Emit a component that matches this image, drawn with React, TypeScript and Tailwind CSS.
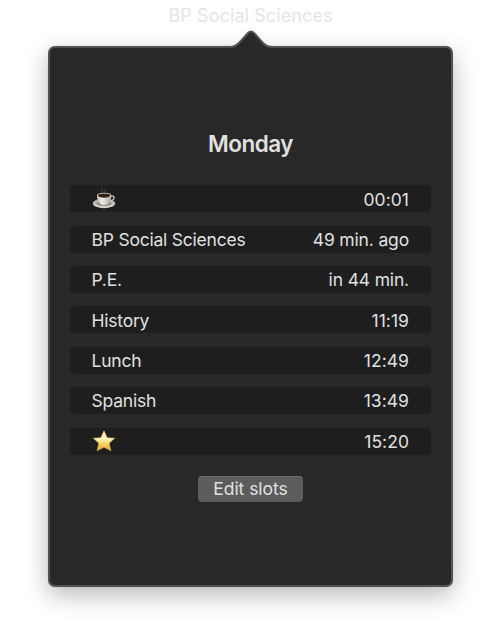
import React from "react";

type Slot = {
  id: string;
  label: React.ReactNode;
  time: string;
  clock?: boolean;
};

function Coffee() {
  return (
    <svg width="24" height="22" viewBox="0 0 24 22" role="img" aria-label="Coffee">
      <defs>
        <linearGradient id="cup" x1="0" x2="1">
          <stop offset="0" stopColor="#b9b6ae" />
          <stop offset="0.35" stopColor="#f1efe9" />
          <stop offset="1" stopColor="#a9a59b" />
        </linearGradient>
        <linearGradient id="saucer" x1="0" y1="0" x2="0" y2="1">
          <stop offset="0" stopColor="#aaa69c" />
          <stop offset="1" stopColor="#dedbd2" />
        </linearGradient>
      </defs>
      <path d="M10 5C8.500 3.500 11.500 3 10 .8M12.500 5C11.500 4 14 3.300 12.800 1.100" fill="none" stroke="#777" strokeWidth="1" opacity=".45" />
      <ellipse cx="12" cy="15.400" rx="11.200" ry="4.900" fill="url(#saucer)" />
      <ellipse cx="12" cy="15.400" rx="7.500" ry="2.600" fill="#8e8a81" />
      <path d="M19 8.300c4.300-1.200 4.300 3.600-.9 4.700" fill="none" stroke="#c9c5bc" strokeWidth="1.300" />
      <path d="M5 7.600C5 12.300 6.500 17 12.100 17S19.300 12.300 19.300 7.600z" fill="url(#cup)" />
      <ellipse cx="12.150" cy="7.400" rx="7.150" ry="2.700" fill="#d9d5cb" />
      <ellipse cx="12.150" cy="7.600" rx="6.200" ry="2.100" fill="#382016" />
    </svg>
  );
}

function Star() {
  return (
    <svg width="24" height="22" viewBox="0 0 24 22" role="img" aria-label="Star">
      <defs>
        <linearGradient id="star" x1="0" y1="0" x2="0" y2="1">
          <stop offset="0" stopColor="#fff0b0" />
          <stop offset="0.4" stopColor="#fff3bd" />
          <stop offset="0.65" stopColor="#fbd365" />
          <stop offset="1" stopColor="#e6a02c" />
        </linearGradient>
      </defs>
      <path d="M12 .8L15.200 7.700L22.700 8.200L17.200 13.300L18.900 20.800L12 17.200L5.100 20.800L6.800 13.300L1.300 8.200L8.800 7.700Z" fill="url(#star)" stroke="#dfae4e" strokeWidth=".6" strokeLinejoin="round" />
    </svg>
  );
}

const slots: Slot[] = [
  { id: "coffee", label: <Coffee />, time: "00:01", clock: true },
  { id: "social", label: "BP Social Sciences", time: "49 min. ago" },
  { id: "pe", label: "P.E.", time: "in 44 min." },
  { id: "history", label: "History", time: "11:19", clock: true },
  { id: "lunch", label: "Lunch", time: "12:49", clock: true },
  { id: "spanish", label: "Spanish", time: "13:49", clock: true },
  { id: "star", label: <Star />, time: "15:20", clock: true },
];

export default function App() {
  return (
    <main className="h-[640px] w-[501px] overflow-hidden bg-white font-['Inter',sans-serif] text-[17.5px] text-[#e0e0e0]">
      <div className="flex h-[46px] justify-center pt-1">
        <span className="h-6 whitespace-nowrap text-[18px] font-[430] leading-6 tracking-[0.1px] text-[#e5e5e5]">BP Social Sciences</span>
      </div>
      <section className="relative mx-auto flex h-[541px] w-[405px] flex-col items-center rounded-[7px] border-2 border-[#505253] bg-[#282828] shadow-[0_0_1px_rgba(0,0,0,0.25),0_8px_24px_rgba(0,0,0,0.28)]">
        <svg className="absolute -top-[19px] left-[179.5px]" width="42" height="22" viewBox="0 0 42 22" aria-hidden="true">
          <path d="M0 18C5 18 7 16 9.500 13L18 4Q21 0 24 4L32.500 13C35 16 37 18 42 18V22H0Z" fill="#282828" />
          <path d="M0 18C5 18 7 16.500 9.500 13.500L18 4Q21 .8 24 4L32.500 13.500C35 16.500 37 18 42 18" fill="none" stroke="#505253" strokeWidth="2" />
        </svg>
        <h1 className="mt-[80px] h-8 text-[22.5px] font-[620] leading-8 tracking-[-0.5px]">Monday</h1>
        <ul className="mt-[25.3px] flex w-[361px] flex-col gap-[13.4px]">
          {slots.map((slot) => (
            <li key={slot.id} className="flex h-[27px] items-center justify-between rounded-[4px] bg-[#1e1e1e] pr-[22px] pl-[21.5px] pt-[0.4px] leading-[27px]">
              <span className="whitespace-nowrap font-[430] tracking-[-0.22px]">{slot.label}</span>
              <span className={slot.clock ? "whitespace-nowrap font-[430] tracking-[0.04px]" : "whitespace-nowrap font-[430] tracking-[-0.16px]"}>{slot.time}</span>
            </li>
          ))}
        </ul>
        <button className="mt-[21.3px] h-[26px] w-[105px] rounded-[4px] bg-[#5c5c5c] font-[430] leading-[26px] tracking-[-0.05px] shadow-[inset_0_1px_0_#6c6c6c,0_0_1px_#151515]">Edit slots</button>
      </section>
    </main>
  );
}
